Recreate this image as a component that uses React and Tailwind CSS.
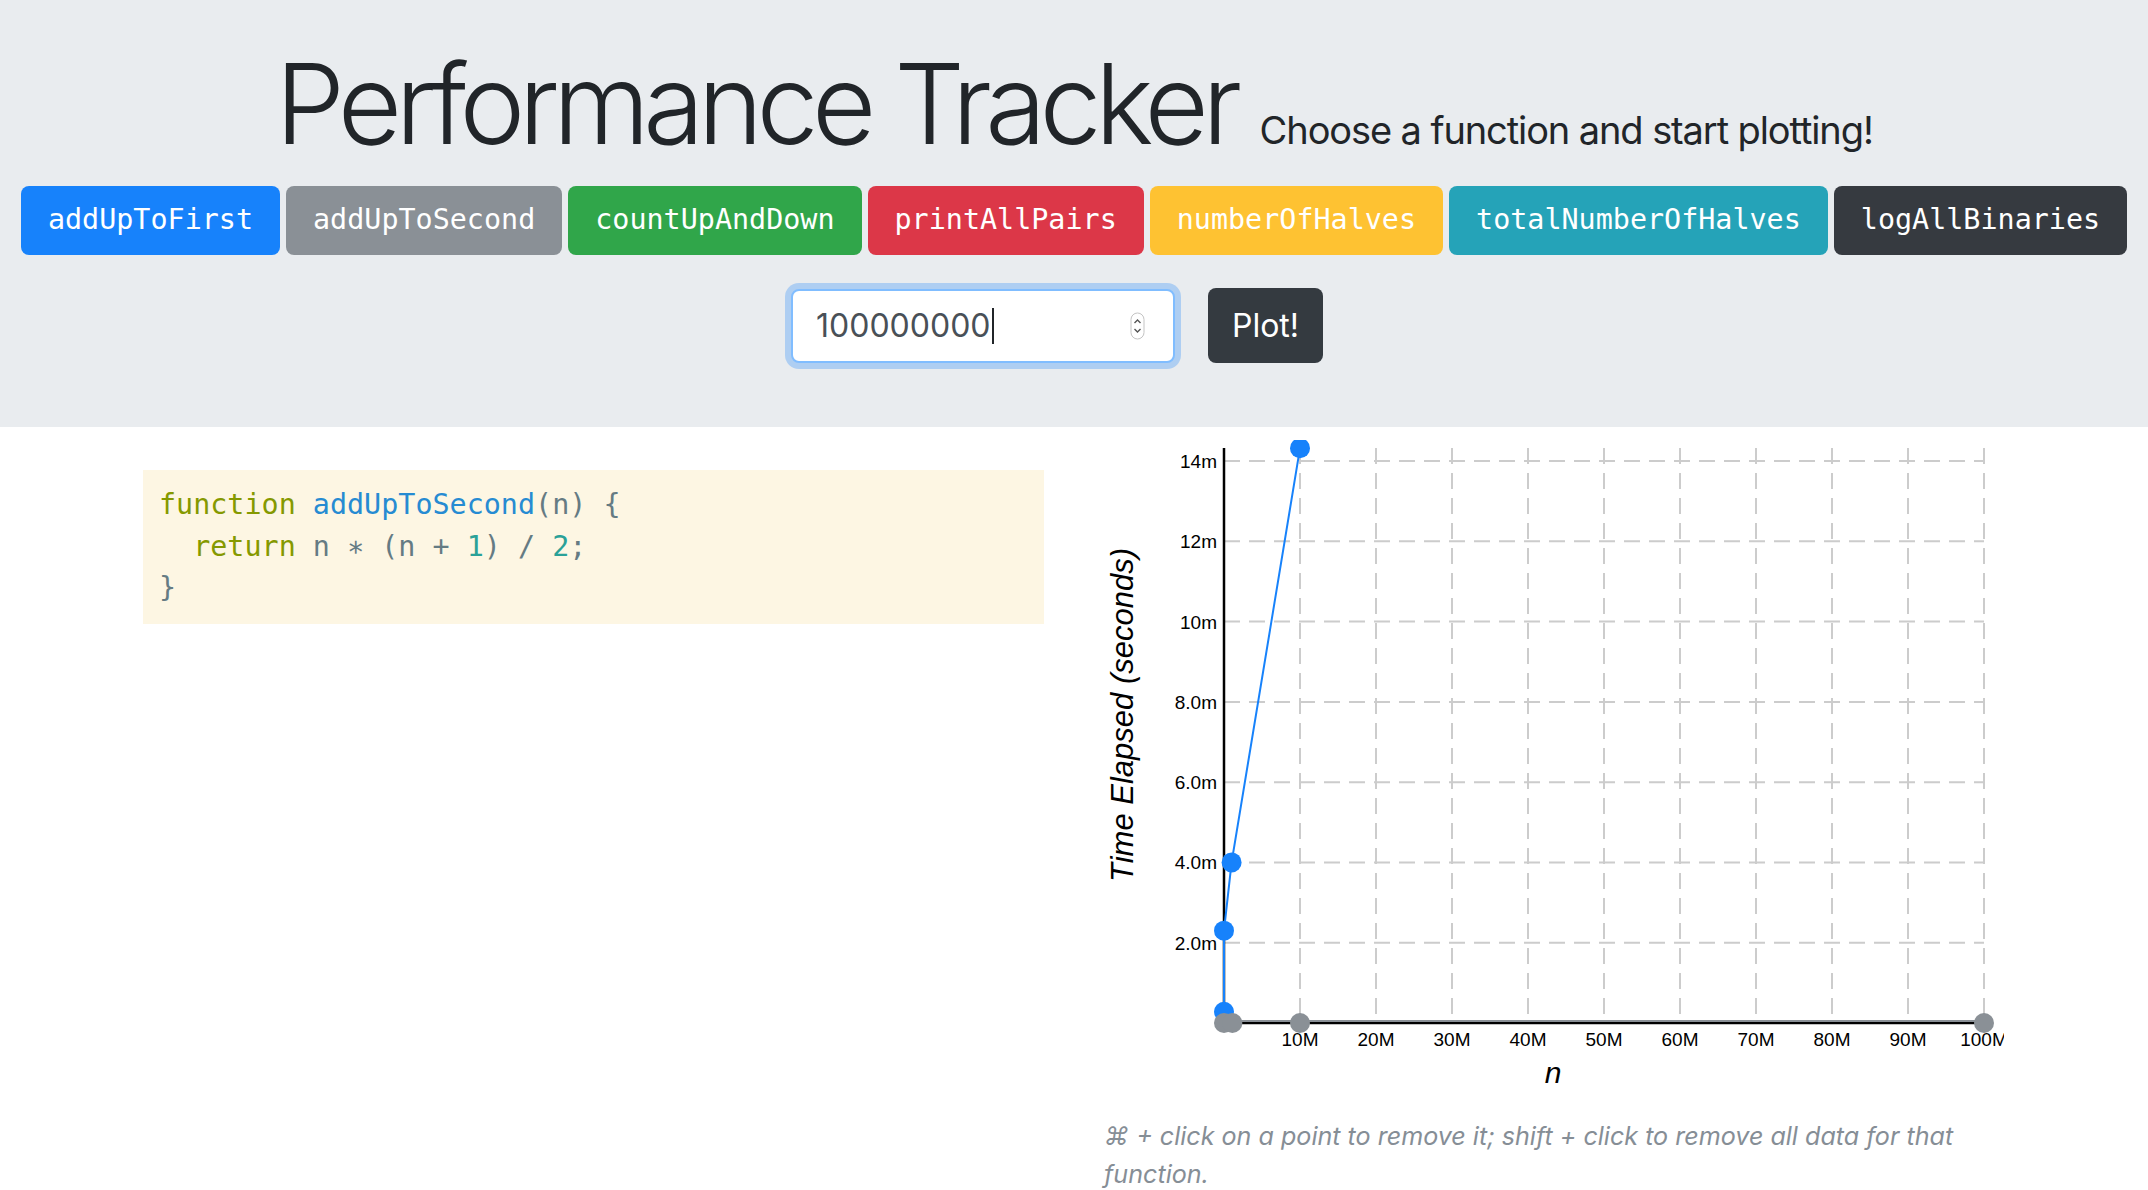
import React from "react";

const FUNCS = [
  { name: "addUpToFirst", bg: "bg-[#1782fb]" },
  { name: "addUpToSecond", bg: "bg-[#8a9096]" },
  { name: "countUpAndDown", bg: "bg-[#30a64a]" },
  { name: "printAllPairs", bg: "bg-[#dc3748]" },
  { name: "numberOfHalves", bg: "bg-[#fec232]" },
  { name: "totalNumberOfHalves", bg: "bg-[#25a3b8]" },
  { name: "logAllBinaries", bg: "bg-[#363a40]" },
];

// chart geometry (svg coords)
const X0 = 120;
const X1 = 880;
const Y0 = 583;
const YT = 8;
const px = (n) => X0 + (n / 1e8) * (X1 - X0);
const py = (ms) => Y0 - ms * 40.14;

const blue = [
  [0, 0.28],
  [0, 2.3],
  [1e6, 4.0],
  [1e7, 14.32],
];
const gray = [
  [0, 0],
  [1.1e6, 0],
  [1e7, 0],
  [1e8, 0],
];

function Chart() {
  const yTicks = ["2.0m", "4.0m", "6.0m", "8.0m", "10m", "12m", "14m"];
  const pts = (data) => data.map(([n, ms]) => `${px(n)},${py(ms)}`).join(" ");
  return (
    <svg width="900" height="677" className="block overflow-hidden" style={{ fontFamily: "'Liberation Sans', Arial, sans-serif" }}>
      {/* grid */}
      {Array.from({ length: 10 }, (_, i) => (
        <line key={"v" + i} x1={X0 + (i + 1) * 76} x2={X0 + (i + 1) * 76} y1={YT} y2={Y0} stroke="#cccccc" strokeWidth="2" strokeDasharray="16 9" />
      ))}
      {yTicks.map((t, j) => (
        <line key={"h" + j} x1={X0} x2={X1} y1={py((j + 1) * 2)} y2={py((j + 1) * 2)} stroke="#cccccc" strokeWidth="2" strokeDasharray="16 9" />
      ))}

      {/* axes */}
      <line x1={X0} x2={X0} y1={YT} y2={Y0 + 1} stroke="#000" strokeWidth="2.5" />
      <line x1={X0} x2={X1} y1={Y0} y2={Y0} stroke="#000" strokeWidth="2.5" />

      {yTicks.map((t, j) => (
        <text key={"yl" + j} x={X0 - 7} y={py((j + 1) * 2) + 7} textAnchor="end" fontSize="19" fill="#000">
          {t}
        </text>
      ))}
      {Array.from({ length: 10 }, (_, i) => (
        <text key={"xl" + i} x={X0 + (i + 1) * 76} y={606} textAnchor="middle" fontSize="19" fill="#000">
          {(i + 1) * 10}M
        </text>
      ))}

      <text x="0" y="0" transform="translate(29 275) rotate(-90)" textAnchor="middle" fontSize="31" fontStyle="italic" fill="#000">
        Time Elapsed (seconds)
      </text>
      <text x="449" y="643" textAnchor="middle" fontSize="30" fontStyle="italic" fill="#000">
        n
      </text>

      {/* series */}
      <polyline points={pts(blue)} fill="none" stroke="#1782fb" strokeWidth="2" />
      {blue.map(([n, ms], i) => (
        <circle key={"b" + i} cx={px(n)} cy={py(ms)} r="10" fill="#1782fb" />
      ))}
      <polyline points={pts(gray)} fill="none" stroke="#8a9096" strokeWidth="2" transform="translate(0 -2)" />
      {gray.map(([n, ms], i) => (
        <circle key={"g" + i} cx={px(n)} cy={py(ms)} r="10" fill="#8a9096" />
      ))}
    </svg>
  );
}

export default function App() {
  const mono = { fontFamily: "'DejaVu Sans Mono', Menlo, monospace" };
  return (
    <div className="min-h-screen bg-white text-[#212529]" style={{ fontFamily: "Inter, 'Liberation Sans', sans-serif" }}>
      {/* header */}
      <div className="bg-[#e9ecef] h-[427px] pt-[37px]">
        <div className="flex items-baseline justify-center gap-[24px]">
          <h1 className="text-[111px] font-light leading-[134px] tracking-[-6.6px]">Performance Tracker</h1>
          <span className="text-[38px] font-normal tracking-[-1.1px]">Choose a function and start plotting!</span>
        </div>

        <div className="mt-[15px] flex justify-center gap-[6px]">
          {FUNCS.map((f) => (
            <button
              key={f.name}
              className={`${f.bg} h-[69px] px-[27px] rounded-[8px] text-white text-[28.4px] flex items-center`}
              style={mono}
            >
              {f.name}
            </button>
          ))}
        </div>

        <div className="mt-[33px] flex justify-center items-center gap-[33px] pr-[34px]">
          <div className="w-[384px] h-[74px] bg-white border-2 border-[#80bdff] rounded-[8px] shadow-[0_0_0_6px_rgba(23,130,251,0.28)] flex items-center pl-[23px] pr-[28px]">
            <span className="text-[32px] text-[#495057]">100000000</span>
            <span className="w-[2px] h-[36px] bg-[#212529] ml-[1px]"></span>
            <span className="ml-auto">
              <svg width="15" height="28" viewBox="0 0 15 28">
                <rect x="1" y="1" width="13" height="26" rx="6.5" fill="#fff" stroke="#c4c4c4" strokeWidth="1" />
                <path d="M4.5 11 L7.5 8 L10.5 11" fill="none" stroke="#555" strokeWidth="1.4" />
                <path d="M4.5 17 L7.5 20 L10.5 17" fill="none" stroke="#555" strokeWidth="1.4" />
              </svg>
            </span>
          </div>
          <button className="w-[115px] h-[75px] bg-[#343a40] rounded-[8px] text-white text-[32px]">Plot!</button>
        </div>
      </div>

      {/* body */}
      <div className="grid grid-cols-2">
        <div className="pt-[43px] pl-[143px] pr-[30px]">
          <pre className="bg-[#fdf6e3] pt-[14px] pb-[15px] px-[16px] text-[28.4px] leading-[41.5px] text-[#657b83]" style={mono}>
            <span className="text-[#859900]">function</span> <span className="text-[#268bd2]">addUpToSecond</span>(n) {"{"}
            {"\n"}
            {"  "}
            <span className="text-[#859900]">return</span> n ∗ (n + <span className="text-[#2aa198]">1</span>) / <span className="text-[#2aa198]">2</span>;
            {"\n"}
            {"}"}
          </pre>
        </div>
        <div className="pt-[13px] pl-[30px] pr-[30px]">
          <Chart />
          <p className="italic text-[25.1px] leading-[38px] text-[#868e96] w-[900px]">
            ⌘ + click on a point to remove it; shift + click to remove all data for that function.
          </p>
        </div>
      </div>
    </div>
  );
}
